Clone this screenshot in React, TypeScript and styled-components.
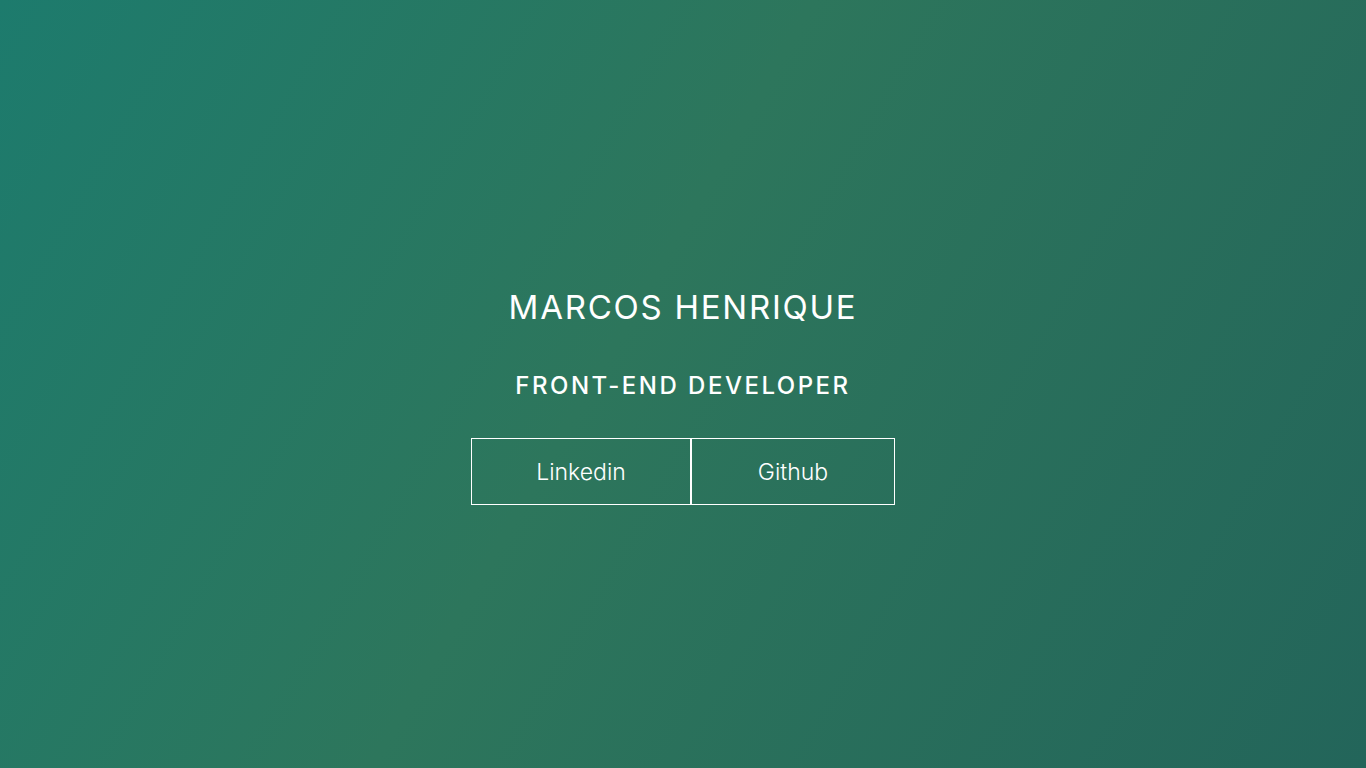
import React from "react";
import styled, { createGlobalStyle } from "styled-components";

const Global = createGlobalStyle`
  html, body { margin: 0; padding: 0; }
  body { font-family: "Inter", "Noto Sans", sans-serif; }
`;

const Page = styled.main`
  min-height: 100vh;
  width: 100%;
  display: flex;
  flex-direction: column;
  align-items: center;
  justify-content: center;
  background: linear-gradient(120deg, #1d7b6d 0%, #2d765c 45%, #23655a 100%);
  color: #fff;
  box-sizing: border-box;
  padding-top: 24px;
`;

const Name = styled.h1`
  margin: 0;
  font-size: 33px;
  font-weight: 400;
  letter-spacing: 1.75px;
  line-height: 40px;
`;

const Role = styled.h2`
  margin: 44px 0 0;
  font-size: 24px;
  font-weight: 500;
  letter-spacing: 2.5px;
  line-height: 30px;
`;

const Links = styled.nav`
  display: flex;
  margin-top: 37px;
`;

const LinkButton = styled.a<{ $w: number }>`
  width: ${(p) => p.$w}px;
  height: 67px;
  box-sizing: border-box;
  border: 1px solid #fff;
  display: flex;
  align-items: center;
  justify-content: center;
  color: #fff;
  text-decoration: none;
  font-size: 23px;
  font-weight: 300;
`;

export default function App() {
  return (
    <>
      <Global />
      <Page>
        <Name>MARCOS HENRIQUE</Name>
        <Role>FRONT-END DEVELOPER</Role>
        <Links>
          <LinkButton $w={220} href="#">Linkedin</LinkButton>
          <LinkButton $w={204} href="#">Github</LinkButton>
        </Links>
      </Page>
    </>
  );
}
